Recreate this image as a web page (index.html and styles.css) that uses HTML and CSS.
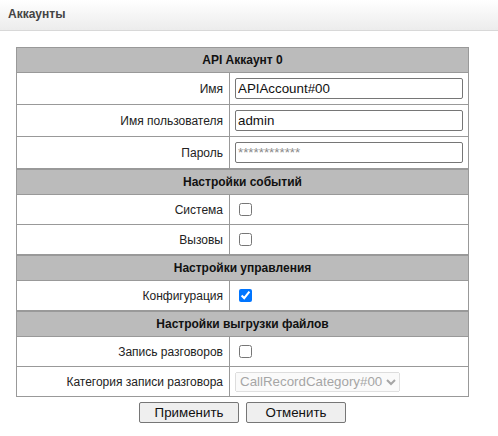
FILE: index.html
```html
<!DOCTYPE html>
<html lang="ru">
<head>
<meta charset="utf-8">
<title>Аккаунты</title>
<link rel="stylesheet" href="styles.css">
</head>
<body>
<div class="topbar">Аккаунты</div>
<div class="panel">
  <div class="sec first">API Аккаунт 0</div>
  <div class="row tall">
    <div class="label">Имя</div>
    <div class="value"><input class="text" type="text" value="APIAccount#00"></div>
  </div>
  <div class="row tall">
    <div class="label">Имя пользователя</div>
    <div class="value"><input class="text" type="text" value="admin"></div>
  </div>
  <div class="row tall">
    <div class="label">Пароль</div>
    <div class="value"><input class="text" type="password" placeholder="************"></div>
  </div>
  <div class="sec">Настройки событий</div>
  <div class="row">
    <div class="label">Система</div>
    <div class="value"><input class="check" type="checkbox"></div>
  </div>
  <div class="row">
    <div class="label">Вызовы</div>
    <div class="value"><input class="check" type="checkbox"></div>
  </div>
  <div class="sec">Настройки управления</div>
  <div class="row">
    <div class="label">Конфигурация</div>
    <div class="value"><input class="check" type="checkbox" checked></div>
  </div>
  <div class="sec">Настройки выгрузки файлов</div>
  <div class="row">
    <div class="label">Запись разговоров</div>
    <div class="value"><input class="check" type="checkbox"></div>
  </div>
  <div class="row last">
    <div class="label">Категория записи разговора</div>
    <div class="value"><select class="sel" disabled><option>CallRecordCategory#00</option></select></div>
  </div>
</div>
<div class="actions">
  <button class="btn" type="button">Применить</button>
  <button class="btn" type="button">Отменить</button>
</div>
</body>
</html>
```
FILE: styles.css
```css
html, body {
  margin: 0;
  padding: 0;
  background: #fff;
}
body {
  font-family: "Liberation Sans", Arial, sans-serif;
  font-size: 12px;
  color: #222;
}
.topbar {
  height: 30px;
  line-height: 29px;
  padding-left: 8px;
  font-weight: bold;
  font-size: 12px;
  color: #444;
  background: linear-gradient(#ffffff, #ececec);
  border-bottom: 1px solid #d8d8d8;
}
.panel {
  margin: 16px 0 0 16px;
  width: 453px;
  box-sizing: border-box;
  border: 1px solid #999;
}
.sec {
  height: 24px;
  line-height: 24px;
  background: #bbbbbb;
  text-align: center;
  font-weight: bold;
  color: #111;
  border-top: 1px solid #999;
  border-bottom: 1px solid #999;
}
.sec.first {
  border-top: none;
}
.row {
  display: flex;
  height: 29px;
  border-bottom: 1px solid #999;
}
.row.tall {
  height: 31px;
}
.row.last {
  border-bottom: none;
}
.label {
  width: 213px;
  flex: none;
  box-sizing: border-box;
  padding-right: 6px;
  border-right: 1px solid #999;
  display: flex;
  align-items: center;
  justify-content: flex-end;
  color: #222;
}
.value {
  flex: 1;
  display: flex;
  align-items: center;
  padding: 0 5px;
}
.text {
  width: 228px;
  height: 21px;
  box-sizing: border-box;
  margin: 0;
  padding: 1px 2px;
  border: 1px solid #767676;
  border-radius: 2px;
  font-family: "Liberation Sans", Arial, sans-serif;
  font-size: 13.33px;
  color: #111;
}
.text::placeholder {
  color: #8a8a8a;
}
.check {
  width: 13px;
  height: 13px;
  margin: 0 0 0 4px;
}
.sel {
  margin: 0;
  height: 20px;
  font-family: "Liberation Sans", Arial, sans-serif;
  font-size: 13.33px;
}
.actions {
  width: 453px;
  margin: 5px 0 0 16px;
  display: flex;
  justify-content: center;
  gap: 7px;
}
.btn {
  width: 100px;
  height: 21px;
  margin: 0;
  padding: 0 6px;
  font-family: "Liberation Sans", Arial, sans-serif;
  font-size: 13.33px;
  color: #111;
  background: #efefef;
  border: 1px solid #767676;
  border-radius: 2px;
}
```
